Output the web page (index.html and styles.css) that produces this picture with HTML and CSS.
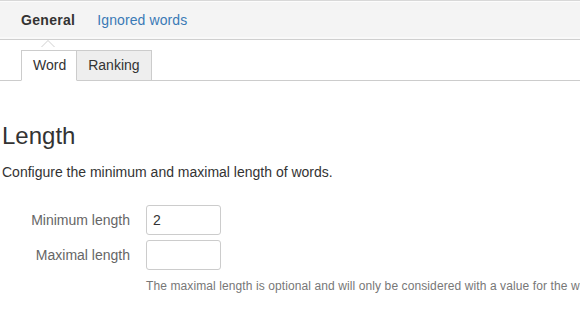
FILE: index.html
```html
<!DOCTYPE html>
<html>
<head>
<meta charset="utf-8">
<link rel="stylesheet" href="styles.css">
</head>
<body>
<nav class="topnav">
  <a class="topnav-item active">General<span class="caret"></span></a>
  <a class="topnav-item link">Ignored words</a>
</nav>
<div class="tabs">
  <div class="tab active">Word</div>
  <div class="tab">Ranking</div>
</div>
<section class="content">
  <h3 class="title">Length</h3>
  <p class="lead">Configure the minimum and maximal length of words.</p>
  <form class="form">
    <div class="row">
      <label class="label">Minimum length</label>
      <div class="field"><input class="input" type="text" value="2"></div>
    </div>
    <div class="row">
      <label class="label">Maximal length</label>
      <div class="field"><input class="input" type="text" value=""></div>
    </div>
    <div class="row">
      <div class="label"></div>
      <div class="help">The maximal length is optional and will only be considered with a value for the word ranking.</div>
    </div>
  </form>
</section>
</body>
</html>
```

FILE: styles.css
```css
html, body {
  margin: 0;
  padding: 0;
  background: #fff;
  font-family: "Liberation Sans", Arial, sans-serif;
  font-size: 14px;
  color: #333;
  overflow: hidden;
}
.topnav {
  display: flex;
  align-items: center;
  height: 38px;
  background: #f4f4f4;
  border-top: 1px solid #d8d8d8;
  border-bottom: 1px solid #cfcfcf;
  box-shadow: inset 0 1px 0 #fcfcfc, inset 0 -4px 0 -2px #f9f9f9;
  padding-left: 21px;
  gap: 22px;
}
.topnav-item {
  position: relative;
  font-size: 14px;
  line-height: 20px;
  padding-bottom: 1px;
}
.topnav-item.active {
  font-weight: bold;
  color: #333;
  letter-spacing: 0.3px;
}
.topnav-item.link {
  color: #3a7ab6;
  letter-spacing: 0.1px;
}
.caret {
  position: absolute;
  left: 50%;
  top: 30px;
  width: 0;
  height: 0;
  margin-left: -7px;
  border-left: 7px solid transparent;
  border-right: 7px solid transparent;
  border-bottom: 7px solid #cfcfcf;
}
.caret::after {
  content: "";
  position: absolute;
  left: -6px;
  top: 1px;
  border-left: 6px solid transparent;
  border-right: 6px solid transparent;
  border-bottom: 6px solid #fff;
}
.tabs {
  display: flex;
  margin-top: 10px;
  padding-left: 21px;
  border-bottom: 1px solid #ccc;
}
.tab {
  height: 29px;
  line-height: 29px;
  padding: 0 11px;
  border: 1px solid #ccc;
  background: #eee;
  color: #333;
  margin-bottom: -1px;
}
.tab.active {
  background: #fff;
  border-bottom-color: #fff;
  padding: 0 10px 0 11px;
}
.tab + .tab {
  border-left: none;
}
.content {
  padding: 42px 0 0 2px;
}
.title {
  margin: 0;
  font-size: 24px;
  font-weight: normal;
  line-height: 26px;
  color: #333;
}
.lead {
  margin: 13px 0 0;
  line-height: 20px;
  color: #333;
}
.form {
  margin-top: 23px;
}
.row {
  display: flex;
  align-items: center;
  margin-bottom: 5px;
}
.label {
  width: 128px;
  flex: none;
  text-align: right;
  color: #666;
  margin-right: 16px;
}
.input {
  box-sizing: border-box;
  width: 75px;
  height: 30px;
  border: 1px solid #ccc;
  border-radius: 3px;
  padding: 0 6px;
  font-family: "Liberation Sans", Arial, sans-serif;
  font-size: 14px;
  color: #333;
  margin: 0;
  outline: none;
}
.help {
  white-space: nowrap;
  font-size: 12px;
  color: #777;
  margin-top: 4px;
  letter-spacing: 0.1px;
}
```
